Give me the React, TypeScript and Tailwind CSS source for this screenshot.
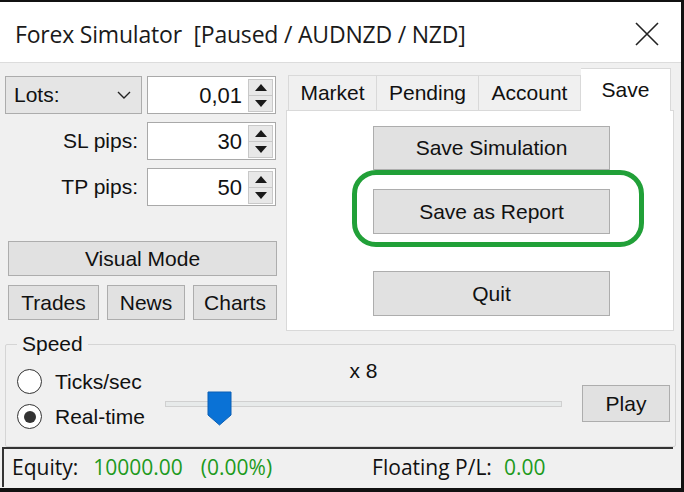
import React from "react";

const ui = { fontFamily: '"Liberation Sans", Arial, sans-serif' };
const seg = { fontFamily: '"Open Sans", "Noto Sans", sans-serif' };

function Spin() {
  return (
    <div className="flex flex-col w-[25px] h-[33px] ml-auto mr-[2px] border border-[#c8c8c8] bg-[#e8e8e8]">
      <div className="flex-1 flex items-center justify-center border-b border-[#c8c8c8]">
        <svg width="12" height="7" viewBox="0 0 12 7"><path d="M6 0 L12 7 L0 7 Z" fill="#1a1a1a" /></svg>
      </div>
      <div className="flex-1 flex items-center justify-center">
        <svg width="12" height="7" viewBox="0 0 12 7"><path d="M0 0 L12 0 L6 7 Z" fill="#1a1a1a" /></svg>
      </div>
    </div>
  );
}

function Num({ v }: { v: string }) {
  return (
    <div className="w-[129px] h-[38px] bg-white border border-[#a9a9a9] flex items-center">
      <span className="flex-1 text-right pr-[6px] text-[22px] text-[#111]">{v}</span>
      <Spin />
    </div>
  );
}

function Btn({ w, h, children, cls = "" }: { w: string; h: string; children: React.ReactNode; cls?: string }) {
  return (
    <div className={`${w} ${h} ${cls} bg-[#e1e1e1] border border-[#adadad] flex items-center justify-center text-[21px] text-[#111]`}>
      {children}
    </div>
  );
}

export default function App() {
  return (
    <div className="relative w-[684px] h-[492px] bg-[#f0f0f0] overflow-hidden border-t-2 border-r-[3px] border-b-[4px] border-[#111]" style={ui}>
      {/* title bar */}
      <div className="h-[61px] bg-white flex items-center justify-between pl-[15px] pr-[22px] border-b border-[#dcdcdc]">
        <span className="text-[23px] text-[#1a1a1a] tracking-[-0.2px] mt-[4px]" style={seg}>
          Forex Simulator&nbsp;&nbsp;[Paused / AUDNZD / NZD]
        </span>
        <svg className="mt-[4px]" width="24" height="24" viewBox="0 0 24 24">
          <path d="M1 1 L23 23 M23 1 L1 23" stroke="#222" strokeWidth="1.6" />
        </svg>
      </div>

      <div className="flex pl-[5px]">
        {/* left column */}
        <div className="w-[272px] pt-[13px] flex flex-col">
          <div className="flex gap-[5px]">
            <div className="w-[137px] h-[38px] bg-[#e5e5e5] border border-[#acacac] flex items-center justify-between pl-[8px] pr-[10px]">
              <span className="text-[21px] text-[#111]">Lots:</span>
              <svg width="14" height="8" viewBox="0 0 14 8"><path d="M1 1 L7 7 L13 1" stroke="#222" strokeWidth="1.4" fill="none" /></svg>
            </div>
            <Num v="0,01" />
          </div>
          <div className="flex gap-[5px] mt-[8px]">
            <div className="w-[137px] h-[38px] flex items-center justify-end pr-[4px] text-[21px] text-[#111]">SL pips:</div>
            <Num v="30" />
          </div>
          <div className="flex gap-[5px] mt-[8px]">
            <div className="w-[137px] h-[38px] flex items-center justify-end pr-[4px] text-[21px] text-[#111]">TP pips:</div>
            <Num v="50" />
          </div>
          <Btn w="w-[269px]" h="h-[35px]" cls="ml-[3px] mt-[35px]">Visual Mode</Btn>
          <div className="flex ml-[3px] mt-[9px] gap-[8px]">
            <Btn w="w-[91px]" h="h-[35px]">Trades</Btn>
            <Btn w="w-[78px]" h="h-[35px]">News</Btn>
            <Btn w="w-[84px]" h="h-[35px]">Charts</Btn>
          </div>
        </div>

        {/* tab control */}
        <div className="ml-[9px] w-[388px] pt-[5px] flex flex-col">
          <div className="flex items-end h-[42px] pl-[2px] text-[21px] text-[#111]">
            <div className="w-[89px] h-[35px] border border-b-0 border-[#d9d9d9] bg-[#f0f0f0] flex items-center justify-center">Market</div>
            <div className="w-[102px] h-[35px] border border-b-0 border-l-0 border-[#d9d9d9] bg-[#f0f0f0] flex items-center justify-center">Pending</div>
            <div className="w-[102px] h-[35px] border border-b-0 border-l-0 border-[#d9d9d9] bg-[#f0f0f0] flex items-center justify-center">Account</div>
            <div className="w-[90px] h-[43px] border border-b-0 border-l-0 border-[#d9d9d9] bg-white flex items-start justify-center pt-[5px] -mb-px relative z-10">Save</div>
          </div>
          <div className="h-[221px] bg-white border border-[#d9d9d9] flex flex-col items-start pl-[86px] pt-[15px]">
            <Btn w="w-[237px]" h="h-[44px]">Save Simulation</Btn>
            <Btn w="w-[237px]" h="h-[45px]" cls="mt-[19px]">Save as Report</Btn>
            <Btn w="w-[237px]" h="h-[45px]" cls="mt-[37px]">Quit</Btn>
          </div>
        </div>
      </div>

      {/* speed group */}
      <div className="relative mx-[5px] mt-[13px] h-[103px] border border-[#d5d5d5] rounded-[2px]">
        <span className="absolute -top-[14px] left-[11px] bg-[#f0f0f0] px-[5px] text-[21px] text-[#111] leading-[26px]">Speed</span>
        <div className="flex h-full pt-[24px]">
          <div className="flex flex-col w-[149px] pl-[11px] gap-[10px]">
            <div className="flex items-center gap-[13px] h-[25px]">
              <div className="w-[25px] h-[25px] rounded-full border-[1.5px] border-[#333] bg-white" />
              <span className="text-[21px] text-[#111]">Ticks/sec</span>
            </div>
            <div className="flex items-center gap-[13px] h-[25px]">
              <div className="w-[25px] h-[25px] rounded-full border-[1.5px] border-[#333] bg-white flex items-center justify-center">
                <div className="w-[12px] h-[12px] rounded-full bg-[#333]" />
              </div>
              <span className="text-[21px] text-[#111]">Real-time</span>
            </div>
          </div>
          <div className="ml-[10px] w-[397px] flex flex-col items-center">
            <span className="text-[21px] text-[#111] leading-[24px] -mt-[10px]">x 8</span>
            <div className="relative w-full h-[6px] mt-[18px] bg-[#e7eaea] border border-[#d0d0d0]">
              <svg className="absolute left-[41px] -top-[11px]" width="25" height="35" viewBox="0 0 25 35">
                <path d="M1 1 H24 V24 L12.5 34 L1 24 Z" fill="#0a72d6" stroke="#0a5fb4" strokeWidth="1" />
              </svg>
            </div>
          </div>
          <Btn w="w-[88px]" h="h-[37px]" cls="ml-[20px] mt-[16px]">Play</Btn>
        </div>
      </div>

      {/* status bar */}
      <div className="ml-[2px] mr-[8px] h-[40px] border-t-2 border-l-2 border-[#333] flex items-center text-[21px]" style={seg}>
        <span className="ml-[8px] text-[#111]">Equity:</span>
        <span className="ml-[15px] text-[#1d9a1d]">10000.00</span>
        <span className="ml-[18px] text-[#1d9a1d]">(0.00%)</span>
        <span className="ml-[100px] text-[#111]">Floating P/L:</span>
        <span className="ml-[12px] text-[#1d9a1d]">0.00</span>
      </div>

      {/* highlight annotation */}
      <div className="absolute left-[352px] top-[168px] w-[292px] h-[77px] border-[5px] border-[#21a038] rounded-[24px]" />
    </div>
  );
}
